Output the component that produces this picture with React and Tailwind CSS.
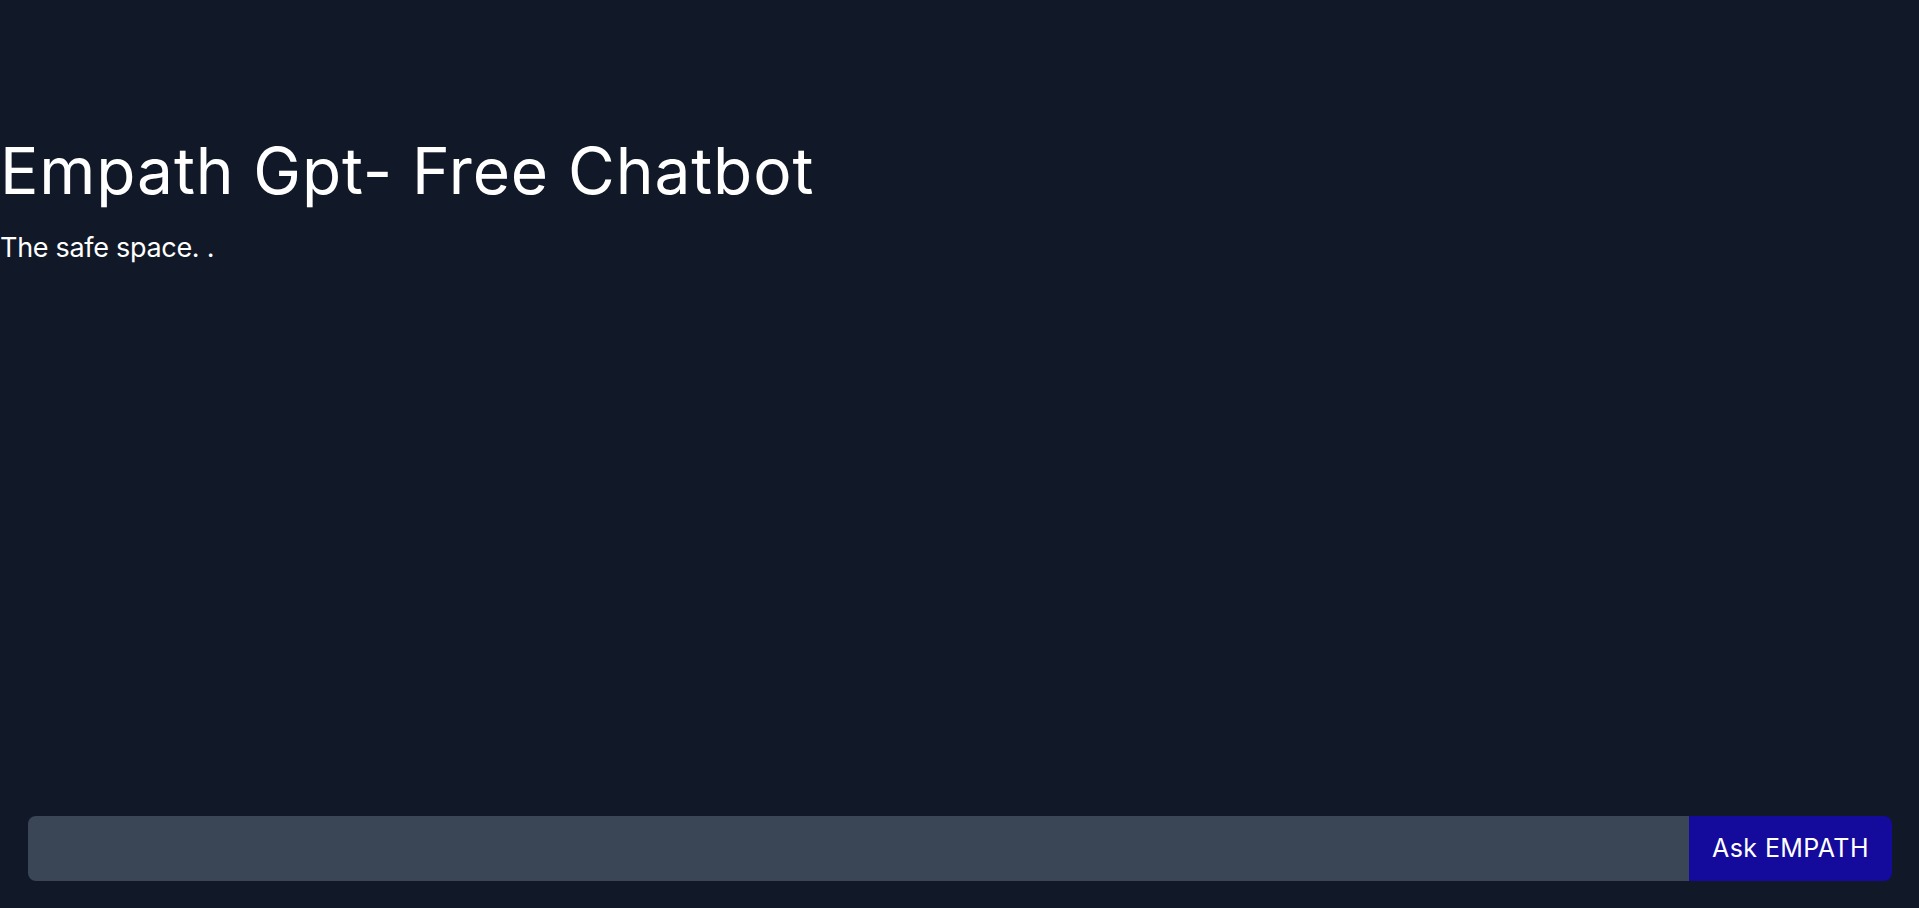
import { useState } from 'react';

const App = () => {
  const [question, setQuestion] = useState('');

  const handleSubmit = (e) => {
    e.preventDefault();
  };

  return (
    <div
      className="flex h-screen flex-col bg-[#111827] text-white"
      style={{ fontFamily: 'Inter, "Noto Sans", sans-serif' }}
    >
      <header className="pt-[133px]">
        <h1 className="text-[64px] font-normal leading-[1.2] tracking-[0.9px]">Empath Gpt- Free Chatbot</h1>
        <p className="mt-5 text-[27px] leading-[1.3] tracking-[-0.3px]">The safe space. .</p>
      </header>

      <div className="flex-1"></div>

      <form onSubmit={handleSubmit} className="flex pl-7 pr-[27px] pb-[27px]">
        <input
          type="text"
          value={question}
          onChange={(e) => setQuestion(e.target.value)}
          className="h-[65px] flex-1 rounded-l-lg bg-[#3a4556] px-4 text-xl text-white outline-none"
        />
        <button
          type="submit"
          className="h-[65px] w-[203px] rounded-r-lg bg-[#140a9b] text-[25px] tracking-[0.4px] text-white"
        >
          Ask EMPATH
        </button>
      </form>
    </div>
  );
};

export default App;
